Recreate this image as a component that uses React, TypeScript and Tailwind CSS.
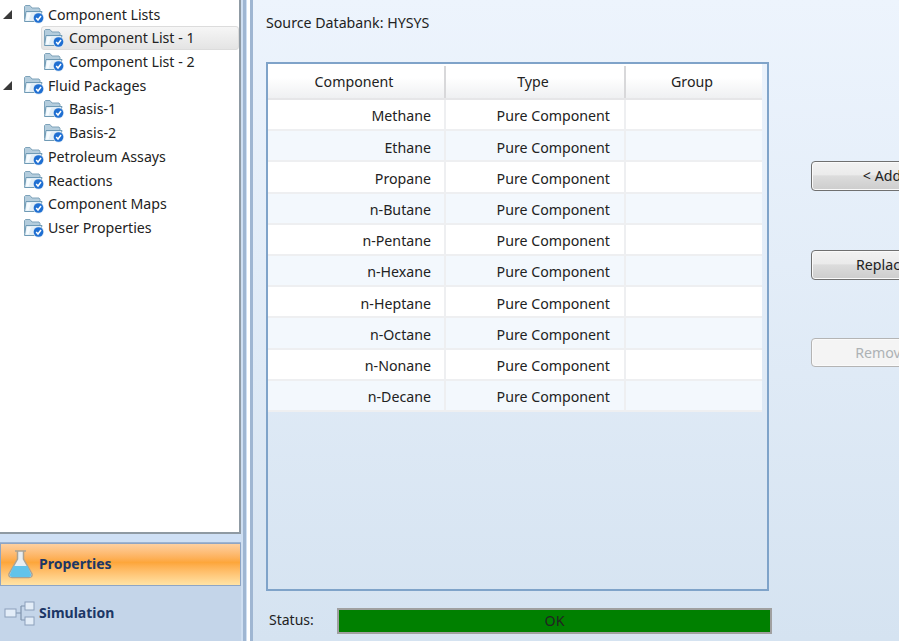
import { ReactNode } from "react";

const components = [
  "Methane",
  "Ethane",
  "Propane",
  "n-Butane",
  "n-Pentane",
  "n-Hexane",
  "n-Heptane",
  "n-Octane",
  "n-Nonane",
  "n-Decane",
];

function FolderIcon() {
  return (
    <svg width="24" height="22" viewBox="0 0 24 22" className="shrink-0">
      <path d="M1.5 16 V3.5 L2.5 2.5 H7 L9 5 H16 L17 6.5 V15 Z" fill="#b4cddd" stroke="#7ea3ba" />
      <path d="M1.5 18.5 L3 8.5 H19 L16.5 18.5 Z" fill="#e2eef6" stroke="#6f9ab5" />
      <path d="M3 17.5 L4 10 H8 L5.5 17.5 Z" fill="#f6fbfe" />
      <circle cx="15.5" cy="15" r="5.5" fill="#d5e4f2" />
      <circle cx="15.5" cy="15" r="4.8" fill="#1f6fd2" />
      <path d="M13.2 15 L15 17 L18 13" fill="none" stroke="#fff" strokeWidth="1.5" />
    </svg>
  );
}

function TreeRow({ label, child, open, selected }: { label: string; child?: boolean; open?: boolean; selected?: boolean }) {
  return (
    <div className={`flex h-[23.7px] items-center ${child ? "pl-[41px]" : ""}`}>
      {!child && (
        <div className="flex w-[21px] shrink-0 items-center">
          {open && <div className="ml-[3px] h-0 w-0 border-b-[9px] border-l-[9px] border-b-[#3a3a3a] border-l-transparent" />}
        </div>
      )}
      <div
        className={`flex h-[24px] flex-1 items-center rounded-[3px] border pl-[1px] ${child ? "gap-[2px]" : "gap-[1px]"} ${
          selected ? "border-[#dcdcdc] bg-gradient-to-b from-[#f6f6f6] to-[#e4e4e4]" : "border-transparent"
        }`}
      >
        <FolderIcon />
        <span className="whitespace-nowrap">{label}</span>
      </div>
    </div>
  );
}

function FlaskIcon() {
  return (
    <svg width="28" height="32" viewBox="0 0 28 32" className="shrink-0">
      <path d="M9 3 H20 M11.5 3 V11 L3 26 Q2.5 29.5 6 29.5 H23 Q26.5 29.5 26 26 L17.5 11 V3" fill="#e8eef2" stroke="#a9a294" strokeWidth="1.5" />
      <path d="M7.5 18 H21.5 L25 26 Q25.5 29 23 29 H6 Q3.5 29 4 26 Z" fill="#62c3ea" />
    </svg>
  );
}

function FlowIcon() {
  return (
    <svg width="32" height="26" viewBox="0 0 32 26" className="shrink-0">
      <path d="M12 13 H17 M17 6 V20 M17 6 H21 M17 20 H21" fill="none" stroke="#7f93ad" strokeWidth="1.2" />
      <rect x="1" y="9" width="11" height="8" fill="#e3edf8" stroke="#8ba0bb" />
      <rect x="21" y="2" width="9" height="8" fill="#e3edf8" stroke="#8ba0bb" />
      <rect x="21" y="17" width="9" height="8" fill="#e3edf8" stroke="#8ba0bb" />
    </svg>
  );
}

function ActionButton({ children, disabled, className }: { children: ReactNode; disabled?: boolean; className: string }) {
  return (
    <div
      className={`flex w-[145px] shrink-0 items-center justify-center rounded-[4px] border pr-[3px] shadow-[inset_0_0_0_1px_#fafafa] ${
        disabled
          ? "border-[#b4b4b4] bg-[#f4f4f4] text-[#adb2b5]"
          : "border-[#707070] bg-[linear-gradient(#f2f2f2,#ebebeb_45%,#dcdcdc_50%,#cdcdcd)]"
      } ${className}`}
    >
      {children}
    </div>
  );
}

export default function App() {
  return (
    <div className="flex h-[641px] w-[899px] overflow-hidden bg-white font-['Noto_Sans',sans-serif] text-[14.2px] text-[#222]">
      <aside className="flex w-[241px] shrink-0 flex-col bg-[#c4d5e9]">
        <div className="h-[534px] shrink-0 border-b-2 border-r-2 border-[#8f9aa3] bg-white pt-[2.5px]">
          <TreeRow label="Component Lists" open />
          <TreeRow label="Component List - 1" child selected />
          <TreeRow label="Component List - 2" child />
          <TreeRow label="Fluid Packages" open />
          <TreeRow label="Basis-1" child />
          <TreeRow label="Basis-2" child />
          <TreeRow label="Petroleum Assays" />
          <TreeRow label="Reactions" />
          <TreeRow label="Component Maps" />
          <TreeRow label="User Properties" />
        </div>
        <div className="h-[9px] shrink-0 border-b border-[#9db4d2] bg-[#cfe0f5]" />
        <div className="flex h-[43px] shrink-0 items-center gap-[5px] border border-[#8ea5c4] bg-gradient-to-b from-[#fdd0a0] via-[#fda63a] via-45% to-[#ffe3a5] pb-[2px] pl-[5px] text-[14px] font-bold text-[#1c3766]">
          <FlaskIcon />
          <span>Properties</span>
        </div>
        <div className="flex h-[55px] shrink-0 items-center gap-[3px] pb-[2px] pl-[4px] text-[14px] font-bold text-[#1c3766]">
          <FlowIcon />
          <span>Simulation</span>
        </div>
      </aside>

      <div className="flex w-[12px] shrink-0 justify-between bg-[#cfdff2] pl-[2px]">
        <div className="w-[3px] bg-[#9fb6d2]" />
        <div className="w-[3px] bg-white" />
        <div className="w-[3px] bg-[#9fb6d2]" />
      </div>

      <main className="flex min-w-0 flex-1 bg-gradient-to-b from-[#edf4fd] to-[#d5e3f1] pl-[13px]">
        <div className="flex w-[505px] shrink-0 flex-col">
          <div className="flex h-[46px] shrink-0 items-center">Source Databank: HYSYS</div>
          <div className="mr-[2px] mt-[16px] h-[529px] shrink-0 border-2 border-[#7fa3c9] pr-[5px]">
            <div className="flex h-[36px] border-b-2 border-[#e6e6e8] bg-gradient-to-b from-white from-40% to-[#eff0f2] pt-[2px] text-center">
              <div className="flex w-[178px] items-center justify-center border-r-2 border-[#d8d8da] pr-[4px]">Component</div>
              <div className="flex w-[180px] items-center justify-center border-r-2 border-[#d8d8da] pr-[4px]">Type</div>
              <div className="flex flex-1 items-center justify-center pr-[4px]">Group</div>
            </div>
            {components.map((name, i) => (
              <div
                key={name}
                className={`flex h-[31.2px] border-b-2 border-[#eeeff1] ${i % 2 === 0 ? "bg-white" : "bg-[#f3f8fd]"}`}
              >
                <div className="flex w-[178px] items-center justify-end border-r-2 border-[#eeeff1] pr-[13px] pt-[3px]">{name}</div>
                <div className="flex w-[180px] items-center justify-end border-r-2 border-[#eeeff1] pr-[14px] pt-[3px]">Pure Component</div>
                <div className="flex-1" />
              </div>
            ))}
          </div>
          <div className="mt-[17px] flex items-center pl-[3px]">
            <span className="w-[68px] shrink-0 pb-[3px] text-[14px]">Status:</span>
            <div className="flex h-[26px] w-[435px] shrink-0 items-center justify-center border-2 border-[#a0a0a0] bg-[#008000]">OK</div>
          </div>
        </div>
        <div className="ml-[40px] flex shrink-0 flex-col">
          <ActionButton className="mt-[161px] h-[30px]">&lt; Add</ActionButton>
          <ActionButton className="mt-[59px] h-[30px]">Replace</ActionButton>
          <ActionButton className="mt-[58px] h-[29px]" disabled>Remove</ActionButton>
        </div>
      </main>
    </div>
  );
}
